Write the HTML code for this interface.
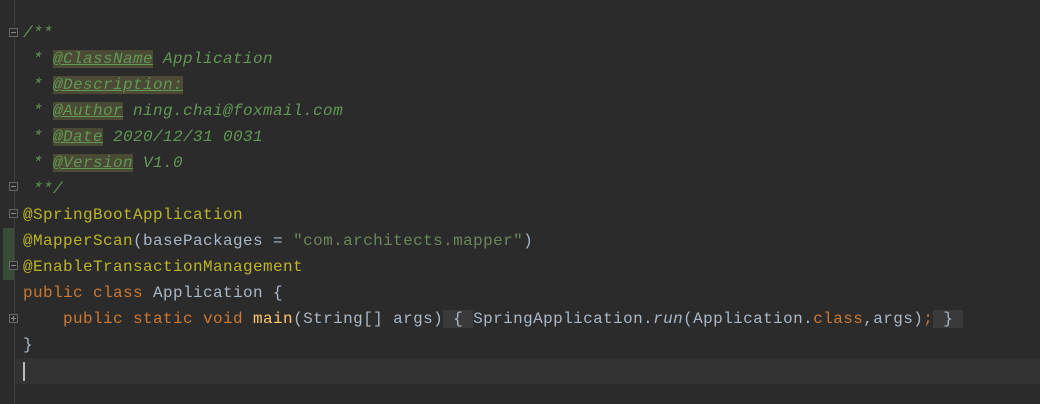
<!DOCTYPE html>
<html><head><style>
body{margin:0;width:1040px;height:404px;background:#2b2b2b;overflow:hidden;position:relative;font-family:"Liberation Mono",monospace;}
.l{position:absolute;left:23px;height:26px;line-height:27px;font-size:16px;letter-spacing:0.4px;white-space:pre;color:#a9b7c6;}
.c{color:#629755;font-style:italic}
.t{background:#4a4a35;text-decoration:underline;font-style:italic;color:#629755}
.a{color:#bbb529}.k{color:#cc7832}.s{color:#6a8759}.m{color:#ffc66d}
.f{background:#3a3a3a}
.g{position:absolute;left:14px;top:0;width:1px;height:404px;background:#3c3c3c}
.fold{position:absolute;left:9px;width:9px;height:9px;border:1px solid #666;background:#2b2b2b;box-sizing:border-box}
.fold:after{content:"";position:absolute;left:1px;top:3px;width:5px;height:1px;background:#888}
</style></head><body>
<div style="position:absolute;left:15px;top:358px;width:1025px;height:26px;background:#323232"></div>
<div style="position:absolute;left:3px;top:228px;width:11px;height:52px;background:#384c38"></div>
<div class="g"></div>
<div class="fold" style="top:28px"></div>
<div class="fold" style="top:182px"></div>
<div class="fold" style="top:209px"></div>
<div class="fold" style="top:261px"></div>
<div class="fold" style="top:314px"><div style="position:absolute;left:3px;top:1px;width:1px;height:5px;background:#888"></div></div>
<div class="l c" style="top:20px">/**</div>
<div class="l c" style="top:46px"> * <span class="t">@ClassName</span> Application</div>
<div class="l c" style="top:72px"> * <span class="t">@Description:</span></div>
<div class="l c" style="top:98px"> * <span class="t">@Author</span> ning.chai@foxmail.com</div>
<div class="l c" style="top:124px"> * <span class="t">@Date</span> 2020/12/31 0031</div>
<div class="l c" style="top:150px"> * <span class="t">@Version</span> V1.0</div>
<div class="l c" style="top:176px"> **/</div>
<div class="l a" style="top:202px">@SpringBootApplication</div>
<div class="l" style="top:228px"><span class="a">@MapperScan</span>(basePackages = <span class="s">"com.architects.mapper"</span>)</div>
<div class="l a" style="top:254px">@EnableTransactionManagement</div>
<div class="l" style="top:280px"><span class="k">public class </span>Application {</div>
<div class="l" style="top:306px">    <span class="k">public static void </span><span class="m">main</span>(String[] args)<span class="f"> { </span>SpringApplication.<i>run</i>(Application.<span class="k">class</span>,args)<span class="k">;</span><span class="f"> } </span></div>
<div class="l" style="top:332px">}</div>
<div style="position:absolute;left:23px;top:362px;width:2px;height:19px;background:#bbb"></div>
</body></html>
